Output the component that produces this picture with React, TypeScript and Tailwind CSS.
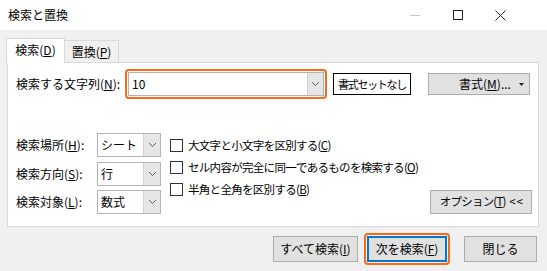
import React from "react";

const font = { fontFamily: '"Noto Sans CJK JP", "Noto Sans", sans-serif' };

function Chevron() {
  return (
    <svg width="9" height="6" viewBox="0 0 9 6">
      <path d="M1 1 L4.5 4.5 L8 1" fill="none" stroke="#606060" strokeWidth="1" />
    </svg>
  );
}

function Select({ value }: { value: string }) {
  return (
    <div className="flex h-[24px] w-[64px] border border-[#b4b4b4] bg-white">
      <div className="flex flex-1 items-center pl-[3px] text-[12px] text-black">{value}</div>
      <div className="flex w-[17px] items-center justify-center border-l border-[#d0d0d0] bg-[#e6e6e6]">
        <Chevron />
      </div>
    </div>
  );
}

function Check({ children }: { children: React.ReactNode }) {
  return (
    <div className="flex h-[21px] items-center">
      <div className="h-[13px] w-[13px] border border-[#333] bg-white" />
      <div className="ml-[5px] whitespace-nowrap text-[11.5px] tracking-[-0.7px] text-black">{children}</div>
    </div>
  );
}

export default function App() {
  return (
    <div className="flex h-[271px] w-[547px] flex-col overflow-hidden whitespace-nowrap bg-[#f0f0f0]" style={font}>
      {/* title bar */}
      <div className="flex h-[30px] items-center bg-white">
        <div className="ml-[8px] text-[12px] text-black">検索と置換</div>
        <div className="flex-1" />
        <div className="flex h-full w-[43px] items-center justify-center">
          <div className="h-px w-[10px] bg-[#c8c8c8]" />
        </div>
        <div className="flex h-full w-[43px] items-center justify-center">
          <div className="h-[10px] w-[10px] border border-[#222]" />
        </div>
        <div className="flex h-full w-[43px] items-center justify-center">
          <svg width="11" height="11" viewBox="0 0 11 11">
            <path d="M0.5 0.5 L10.5 10.5 M10.5 0.5 L0.5 10.5" stroke="#222" strokeWidth="1" />
          </svg>
        </div>
        <div className="w-[25px]" />
      </div>

      <div className="flex flex-1 flex-col px-[7px] pt-[8px]">
        {/* tabs */}
        <div className="relative z-10 flex h-[24px] items-end">
          <div className="-mb-px -ml-px flex h-[25px] w-[59px] items-center justify-center border border-b-0 border-[#d9d9d9] bg-white pb-[2px] text-[12px] text-black">
            検索(<u>D</u>)
          </div>
          <div className="flex h-[22px] w-[54px] items-center justify-center border border-b-0 border-l-0 border-[#d9d9d9] bg-[#f0f0f0] text-[12px] text-black">
            置換(<u>P</u>)
          </div>
        </div>

        {/* panel */}
        <div className="flex h-[165px] w-[532px] flex-col border border-[#d9d9d9] bg-white">
          <div className="mt-[6px] flex h-[30px] items-center">
            <div className="ml-[8px] w-[109px] text-[12px] text-black">
              検索する文字列(<u>N</u>):
            </div>
            <div className="rounded-[4px] border-[2px] border-[#f76b15] p-px">
              <div className="flex h-[24px] w-[196px] border border-[#b4b4b4] bg-white">
                <div className="flex flex-1 items-center pl-[3px] text-[12px] text-black">10</div>
                <div className="flex w-[16px] items-center justify-center border-l border-[#d0d0d0] bg-[#e6e6e6]">
                  <Chevron />
                </div>
              </div>
            </div>
            <div className="ml-[6px] flex h-[22px] w-[78px] items-center justify-center border border-black text-[11px] tracking-[-1.3px] text-black">
              書式セットなし
            </div>
            <div className="ml-[17px] flex h-[22px] w-[102px] items-center border border-[#adadad] bg-[#e1e1e1] text-[12px] text-black">
              <div className="flex-1 pl-[22px] text-center">
                書式(<u>M</u>)...
              </div>
              <svg width="5" height="3" viewBox="0 0 5 3" className="mr-[5px]">
                <path d="M0 0 L5 0 L2.5 3 Z" fill="#222" />
              </svg>
            </div>
          </div>

          <div className="mt-[34px] flex">
            <div className="ml-[8px] flex flex-col gap-[4.5px]">
              {[
                ["検索場所", "H", "シート"],
                ["検索方向", "S", "行"],
                ["検索対象", "L", "数式"],
              ].map(([l, k, v]) => (
                <div key={k} className="flex items-center">
                  <div className="w-[81px] text-[12px] text-black">
                    {l}(<u>{k}</u>):
                  </div>
                  <Select value={v} />
                </div>
              ))}
            </div>
            <div className="ml-[9px] mt-[2px] flex flex-col gap-px">
              <Check>
                大文字と小文字を区別する(<u>C</u>)
              </Check>
              <Check>
                セル内容が完全に同一であるものを検索する(<u>O</u>)
              </Check>
              <Check>
                半角と全角を区別する(<u>B</u>)
              </Check>
            </div>
            <div className="flex flex-1 items-end justify-end pr-[6px]">
              <div className="flex h-[24px] w-[102px] items-center justify-center border border-[#adadad] bg-[#e1e1e1] text-[11.5px] tracking-[-0.8px] text-black">
                オプション(<u>T</u>)&nbsp;&nbsp;&lt;&nbsp;&lt;
              </div>
            </div>
          </div>
        </div>

        {/* bottom buttons */}
        <div className="mt-[6px] flex items-center">
          <div className="ml-[266px] flex h-[26px] w-[85px] items-center justify-center border border-[#adadad] bg-[#e1e1e1] text-[12px] text-black">
            すべて検索(<u>I</u>)
          </div>
          <div className="ml-[6px] rounded-[4px] border-[2px] border-[#f76b15] p-px">
            <div className="flex h-[26px] w-[80px] items-center justify-center border-[2px] border-[#0078d7] bg-[#e1e1e1] text-[12px] text-black">
              次を検索(<u>F</u>)
            </div>
          </div>
          <div className="ml-[14px] flex h-[26px] w-[73px] items-center justify-center border border-[#adadad] bg-[#e1e1e1] text-[12px] text-black">
            閉じる
          </div>
        </div>
      </div>
    </div>
  );
}
